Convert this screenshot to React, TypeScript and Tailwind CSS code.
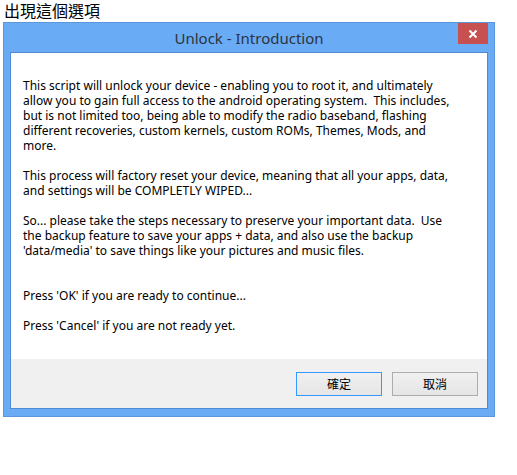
const body = [
  'This script will unlock your device - enabling you to root it, and ultimately',
  'allow you to gain full access to the android operating system.  This includes,',
  'but is not limited too, being able to modify the radio baseband, flashing',
  'different recoveries, custom kernels, custom ROMs, Themes, Mods, and',
  'more.',
  '',
  'This process will factory reset your device, meaning that all your apps, data,',
  'and settings will be COMPLETLY WIPED...',
  '',
  'So... please take the steps necessary to preserve your important data.  Use',
  'the backup feature to save your apps + data, and also use the backup',
  "'data/media' to save things like your pictures and music files.",
  '',
  '',
  "Press 'OK' if you are ready to continue...",
  '',
  "Press 'Cancel' if you are not ready yet.",
];

function CloseIcon() {
  return (
    <svg width="10" height="10" viewBox="0 0 10 10" className="block">
      <path d="M1.5 1.5 L8.5 8.5 M8.5 1.5 L1.5 8.5" stroke="#ffffff" strokeWidth="2" />
    </svg>
  );
}

export default function App() {
  return (
    <div className="w-[517px] h-[475px] bg-white">
      <div className="h-[22px] pl-[4px] text-[16px] leading-[20px] text-black font-['Noto_Sans_CJK_TC',sans-serif]">
        出現這個選項
      </div>

      <div className="ml-[3px] w-[492px] h-[395px] border border-[#5b95da] bg-[#6aabf5] flex flex-col px-[6px] pb-[7px]">
        <div className="relative h-[29px] flex items-center justify-center">
          <span className="text-[15px] text-[#2b3440] font-['Noto_Sans',sans-serif] leading-none pt-[1px]">
            Unlock - Introduction
          </span>
          <button className="absolute right-0 top-0 w-[30px] h-[21px] bg-[#c75050] flex items-center justify-center">
            <CloseIcon />
          </button>
        </div>

        <div className="flex-1 flex flex-col border border-[#4f8ad2] bg-white">
          <div className="flex-1 pl-[12px] pt-[25px] text-[12px] leading-[15px] text-black font-['Noto_Sans',sans-serif] whitespace-pre">
            {body.map((line, i) => (
              <div key={i} className="h-[15px]">
                {line}
              </div>
            ))}
          </div>

          <div className="h-[49px] bg-[#f0f0f0] flex justify-end items-start pt-[13px] pr-[9px] gap-[10px]">
            <button className="w-[86px] h-[24px] border border-[#3399ff] bg-gradient-to-b from-[#f0f0f0] to-[#e5e5e5] text-[12px] text-black font-['Noto_Sans_CJK_TC',sans-serif] leading-none">
              確定
            </button>
            <button className="w-[86px] h-[24px] border border-[#adadad] bg-gradient-to-b from-[#f0f0f0] to-[#e5e5e5] text-[12px] text-black font-['Noto_Sans_CJK_TC',sans-serif] leading-none">
              取消
            </button>
          </div>
        </div>
      </div>
    </div>
  );
}
